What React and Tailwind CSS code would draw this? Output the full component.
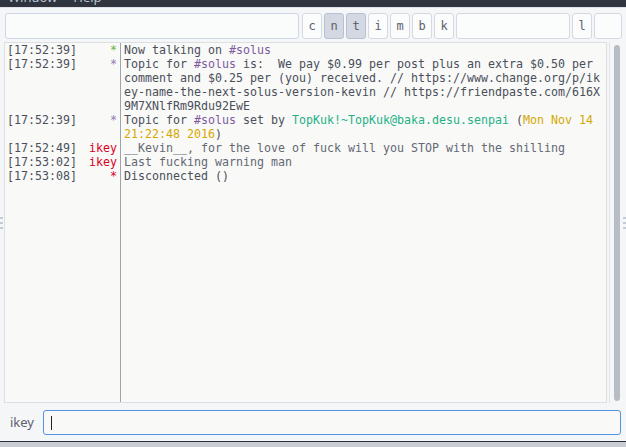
const mono = "font-['DejaVu_Sans_Mono',monospace]";

const rows = [
  {
    time: "[17:52:39]",
    nick: "*",
    nickColor: "text-[#6fae3a]",
    body: (
      <>
        Now talking on <span className="text-[#7c5a9c]">#solus</span>
      </>
    ),
  },
  {
    time: "[17:52:39]",
    nick: "*",
    nickColor: "text-[#8d79b3]",
    body: (
      <>
        Topic for <span className="text-[#7c5a9c]">#solus</span> is:{"\u00a0"} We pay $0.99 per post plus an
        extra $0.50 per comment and $0.25 per (you) received. //
        https://www.change.org/p/ikey-name-the-next-solus-version-kevin //
        https://friendpaste.com/616X9M7XNlfRm9Rdu92EwE
      </>
    ),
  },
  {
    time: "[17:52:39]",
    nick: "*",
    nickColor: "text-[#8d79b3]",
    body: (
      <>
        Topic for <span className="text-[#7c5a9c]">#solus</span> set by{" "}
        <span className="text-[#25b187]">TopKuk!~TopKuk@baka.desu.senpai</span> (
        <span className="text-[#d6a800]">Mon Nov 14 21:22:48 2016</span>)
      </>
    ),
  },
  {
    time: "[17:52:49]",
    nick: "ikey",
    nickColor: "text-[#d8001c]",
    body: "__Kevin__, for the love of fuck will you STOP with the shilling",
    dim: true,
  },
  {
    time: "[17:53:02]",
    nick: "ikey",
    nickColor: "text-[#d8001c]",
    body: "Last fucking warning man",
    dim: true,
  },
  {
    time: "[17:53:08]",
    nick: "*",
    nickColor: "text-[#d8001c]",
    body: "Disconnected ()",
  },
];

const buttons = [
  { label: "c" },
  { label: "n", on: true },
  { label: "t", on: true },
  { label: "i" },
  { label: "m" },
  { label: "b" },
  { label: "k" },
];

function ModeButton({ label, on }) {
  return (
    <div
      className={`w-[20px] h-[26px] rounded-[3px] border flex items-center justify-center text-[12px] text-[#5c616c] ${mono} ${
        on ? "bg-[#d3d8e2] border-[#b9c0cf]" : "bg-[#fbfcfc] border-[#d4d9e3]"
      }`}
    >
      {label}
    </div>
  );
}

function Grip() {
  return (
    <div className="flex flex-col gap-[3px]">
      <div className="w-[3px] h-[2px] bg-[#c4cad6]" />
      <div className="w-[3px] h-[2px] bg-[#c4cad6]" />
      <div className="w-[3px] h-[2px] bg-[#c4cad6]" />
    </div>
  );
}

export default function App() {
  return (
    <div className="w-[626px] h-[447px] overflow-hidden flex flex-col bg-[#cdd1d8]">
      {/* menu bar, mostly scrolled off */}
      <div className="h-[7px] bg-[#2f343f] overflow-hidden shrink-0">
        <div className="-mt-[10px] flex gap-[16px] pl-[8px] text-[13px] leading-[14px] text-[#bac3cf] font-['Noto_Sans',sans-serif]">
          <span>Window</span>
          <span>Help</span>
        </div>
      </div>

      <div className="h-[434px] bg-[#f5f6f7] flex flex-col shrink-0 border-t border-[#e1e3e8]">
        {/* toolbar */}
        <div className="flex mt-[5px] pl-[5px] gap-[2px] h-[26px]">
          <div className="w-[294px] h-[26px] rounded-[3px] border border-[#cfd6e6] bg-[#fafbfb] mr-[1px]" />
          {buttons.map((b) => (
            <ModeButton key={b.label} {...b} />
          ))}
          <div className="w-[114px] h-[26px] rounded-[3px] border border-[#d4d9e3] bg-[#fbfcfc]" />
          <ModeButton label="l" />
          <div className="w-[28px] h-[26px] rounded-[3px] border border-[#d4d9e3] bg-[#fbfcfc]" />
        </div>

        {/* chat + scrollbar */}
        <div className="flex mt-[3px] h-[361px]">
          <div className="w-[4px] flex items-center">
            <Grip />
          </div>
          <div className={`w-[603px] h-full border border-[#dcdfe3] bg-[#f9f9f8] flex flex-col text-[11.63px] leading-[14px] text-[#4a4f5a] ${mono}`}>
            {rows.map((r, i) => (
              <div key={i} className="flex">
                <div className="w-[116px] shrink-0 flex justify-between pl-[2px] pr-[3px] border-r border-[#9ea3b0]">
                  <span>{r.time}</span>
                  <span className={r.nickColor}>{r.nick}</span>
                </div>
                <div className={`w-[482px] pl-[3px] break-all ${r.dim ? "text-[#646974]" : ""}`}>{r.body}</div>
              </div>
            ))}
            <div className="flex-1 flex">
              <div className="w-[116px] border-r border-[#9ea3b0]" />
            </div>
          </div>
          <div className="w-[14px] ml-[2px] border-l border-[#e2e4e8] flex justify-center pt-[3px] pb-[2px]">
            <div className="w-[6px] h-full rounded-full bg-[#b8bcc4] ml-[1px]" />
          </div>
          <div className="flex-1 flex items-center justify-center">
            <Grip />
          </div>
        </div>

        {/* input row */}
        <div className="flex items-center mt-[7px] h-[25px]">
          <div className="w-[43px] pl-[10px] text-[13px] text-[#5c616c] font-['Noto_Sans',sans-serif]">ikey</div>
          <div className="w-[578px] h-[25px] rounded-[3px] border border-[#5294e2] bg-[#f9f9f8] flex items-center pl-[7px]">
            <div className="w-[1px] h-[14px] bg-[#222]" />
          </div>
        </div>
      </div>

      <div className="h-[1px] bg-[#2b2e37] shrink-0" />
      <div className="flex-1 bg-[#c9ccd3]" />
    </div>
  );
}
